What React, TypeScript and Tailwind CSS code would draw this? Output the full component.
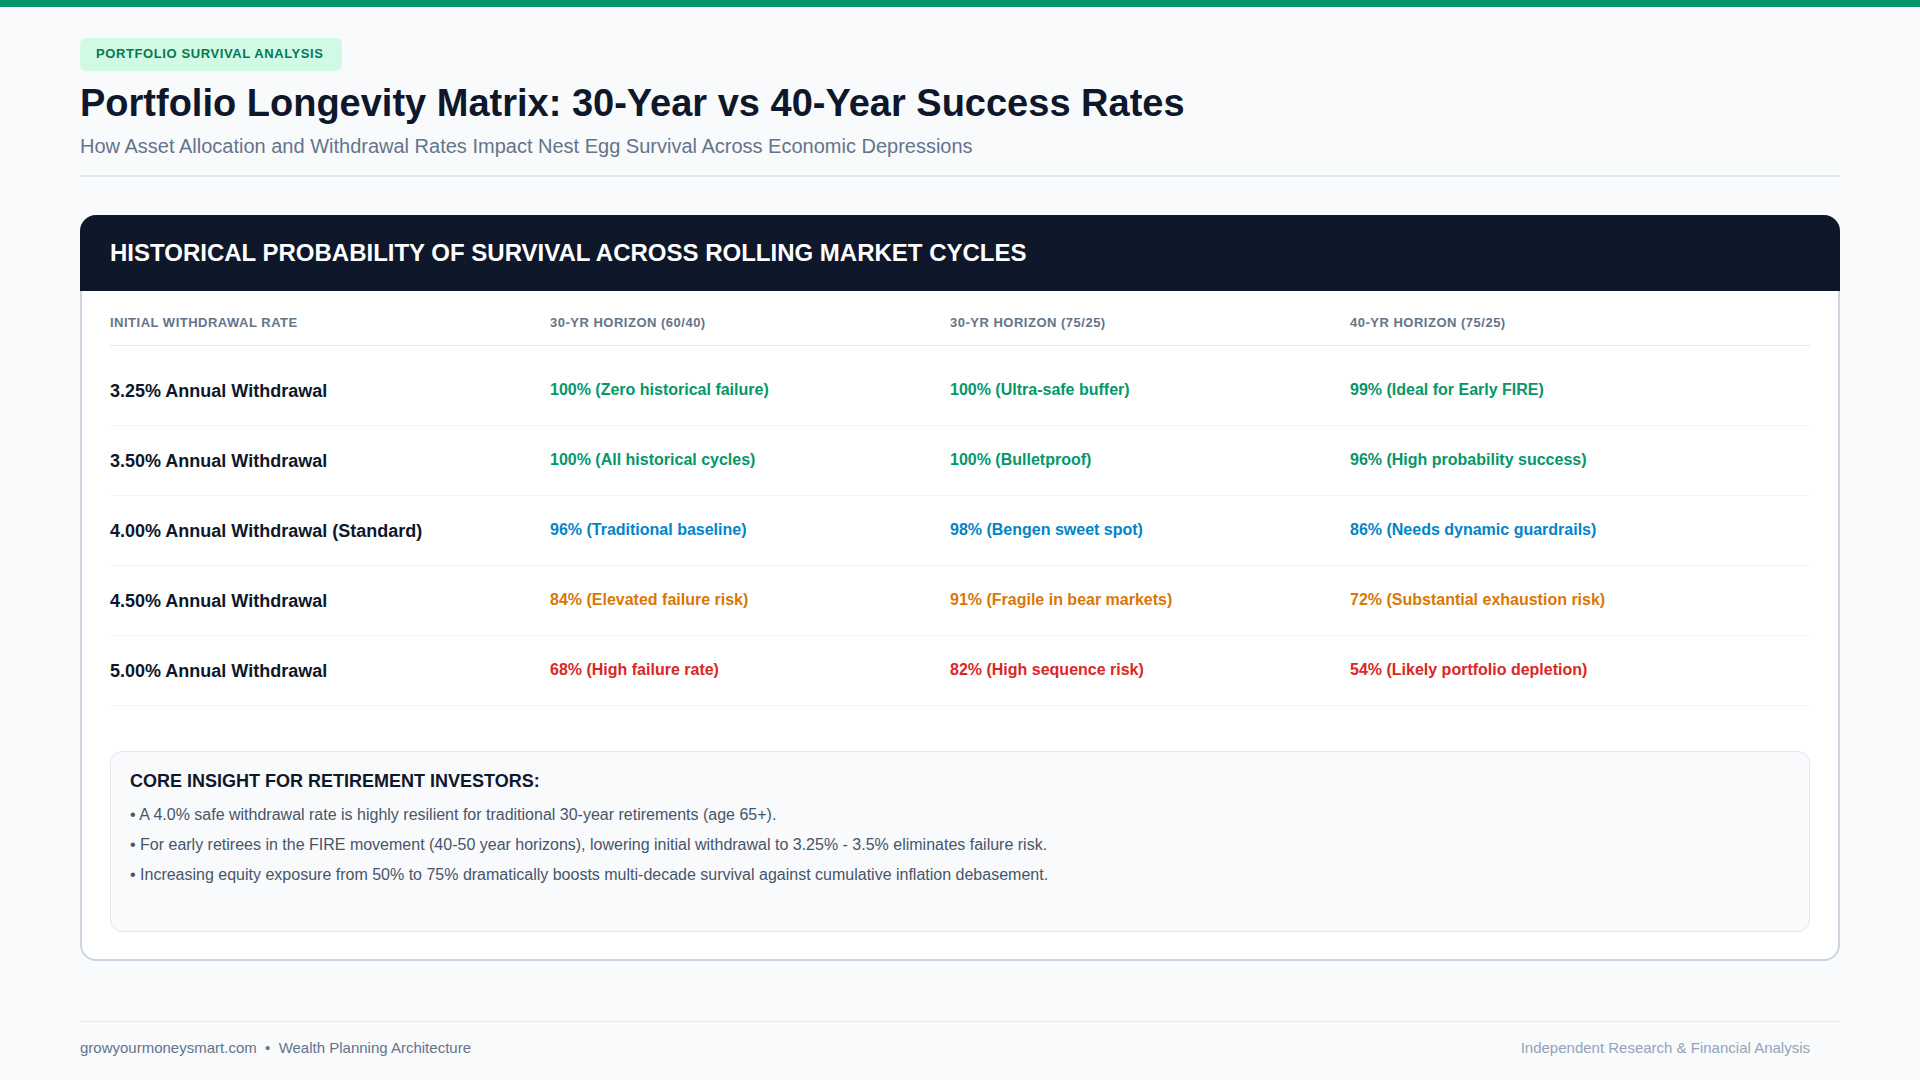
import React from 'react';

type Cell = { text: string; tone: 'green' | 'blue' | 'amber' | 'red' };

const toneClass: Record<Cell['tone'], string> = {
  green: 'text-[#059669]',
  blue: 'text-[#0284c7]',
  amber: 'text-[#d97706]',
  red: 'text-[#dc2626]',
};

const rows: { label: string; cells: Cell[] }[] = [
  {
    label: '3.25% Annual Withdrawal',
    cells: [
      { text: '100% (Zero historical failure)', tone: 'green' },
      { text: '100% (Ultra-safe buffer)', tone: 'green' },
      { text: '99% (Ideal for Early FIRE)', tone: 'green' },
    ],
  },
  {
    label: '3.50% Annual Withdrawal',
    cells: [
      { text: '100% (All historical cycles)', tone: 'green' },
      { text: '100% (Bulletproof)', tone: 'green' },
      { text: '96% (High probability success)', tone: 'green' },
    ],
  },
  {
    label: '4.00% Annual Withdrawal (Standard)',
    cells: [
      { text: '96% (Traditional baseline)', tone: 'blue' },
      { text: '98% (Bengen sweet spot)', tone: 'blue' },
      { text: '86% (Needs dynamic guardrails)', tone: 'blue' },
    ],
  },
  {
    label: '4.50% Annual Withdrawal',
    cells: [
      { text: '84% (Elevated failure risk)', tone: 'amber' },
      { text: '91% (Fragile in bear markets)', tone: 'amber' },
      { text: '72% (Substantial exhaustion risk)', tone: 'amber' },
    ],
  },
  {
    label: '5.00% Annual Withdrawal',
    cells: [
      { text: '68% (High failure rate)', tone: 'red' },
      { text: '82% (High sequence risk)', tone: 'red' },
      { text: '54% (Likely portfolio depletion)', tone: 'red' },
    ],
  },
];

const columns = ['Initial Withdrawal Rate', '30-Yr Horizon (60/40)', '30-Yr Horizon (75/25)', '40-Yr Horizon (75/25)'];

export default function App() {
  return (
    <div className="min-h-screen bg-[#f8fafc] font-['Liberation_Sans',Arial,sans-serif] text-[#0f172a]">
      {/* top accent bar */}
      <div className="h-[7px] w-full bg-[#059669]" />

      <main className="px-[80px]">
        {/* HEADER */}
        <header className="pt-[31px]">
          <span className="inline-block rounded-md bg-[#d1fae5] pt-[8px] pr-[18px] pb-[10px] pl-[16px] text-[13px] leading-[15px] font-bold tracking-[0.6px] text-[#047857]">
            PORTFOLIO SURVIVAL ANALYSIS
          </span>
          <h1 className="mt-[10px] text-[38px] leading-[1.2] font-bold text-[#0f172a]">
            Portfolio Longevity Matrix: 30-Year vs 40-Year Success Rates
          </h1>
          <p className="mt-[5px] text-[20px] leading-[28px] text-[#64748b]">
            How Asset Allocation and Withdrawal Rates Impact Nest Egg Survival Across Economic Depressions
          </p>
          <div className="mt-[15px] h-[2px] bg-[#e2e8f0]" />
        </header>

        {/* MATRIX CARD */}
        <section className="mt-[38px]">
          <div className="flex h-[76px] items-center rounded-t-2xl bg-[#0f172a] px-[30px]">
            <h2 className="text-[24px] font-bold text-white">
              HISTORICAL PROBABILITY OF SURVIVAL ACROSS ROLLING MARKET CYCLES
            </h2>
          </div>
          <div className="rounded-b-2xl border-2 border-t-0 border-[#cbd5e1] bg-white px-[28px] pt-[24px] pb-[27px]">
            <div className="grid grid-cols-[440px_400px_400px_1fr] border-b border-[#e2e8f0] pb-[14px]">
              {columns.map((c) => (
                <div key={c} className="text-[13px] leading-[16px] font-bold tracking-[0.5px] text-[#64748b] uppercase">
                  {c}
                </div>
              ))}
            </div>
            <div className="mt-[10px]">
              {rows.map((r) => (
                <div
                  key={r.label}
                  className="grid h-[70px] grid-cols-[440px_400px_400px_1fr] items-center border-b border-[#f1f5f9]"
                >
                  <div className="pt-[2px] text-[18px] font-bold text-[#0f172a]">{r.label}</div>
                  {r.cells.map((c) => (
                    <div key={c.text} className={`text-[16px] font-bold ${toneClass[c.tone]}`}>
                      {c.text}
                    </div>
                  ))}
                </div>
              ))}
            </div>

            {/* INSIGHT BOX */}
            <div className="mt-[45px] rounded-xl border border-[#e2e8f0] bg-[#f8fafc] px-[19px] pt-[16px] pb-[37px]">
              <h3 className="text-[18px] leading-[26px] font-bold text-[#0f172a]">CORE INSIGHT FOR RETIREMENT INVESTORS:</h3>
              <div className="mt-[10px] text-[16px] leading-[22px] text-[#475569]">
                <p className="mb-2">• A 4.0% safe withdrawal rate is highly resilient for traditional 30-year retirements (age 65+).</p>
                <p className="mb-2">
                  • For early retirees in the FIRE movement (40-50 year horizons), lowering initial withdrawal to 3.25% - 3.5% eliminates failure risk.
                </p>
                <p className="mb-2">
                  • Increasing equity exposure from 50% to 75% dramatically boosts multi-decade survival against cumulative inflation debasement.
                </p>
              </div>
            </div>
          </div>
        </section>

        {/* FOOTER */}
        <footer className="mt-[60px] flex items-center justify-between border-t border-[#e2e8f0] pt-[16px] pb-[22px] text-[15px] leading-[20px]">
          <p className="text-[#64748b]">growyourmoneysmart.com&nbsp; • &nbsp;Wealth Planning Architecture</p>
          <p className="pr-[30px] text-[#94a3b8]">Independent Research &amp; Financial Analysis</p>
        </footer>
      </main>
    </div>
  );
}
